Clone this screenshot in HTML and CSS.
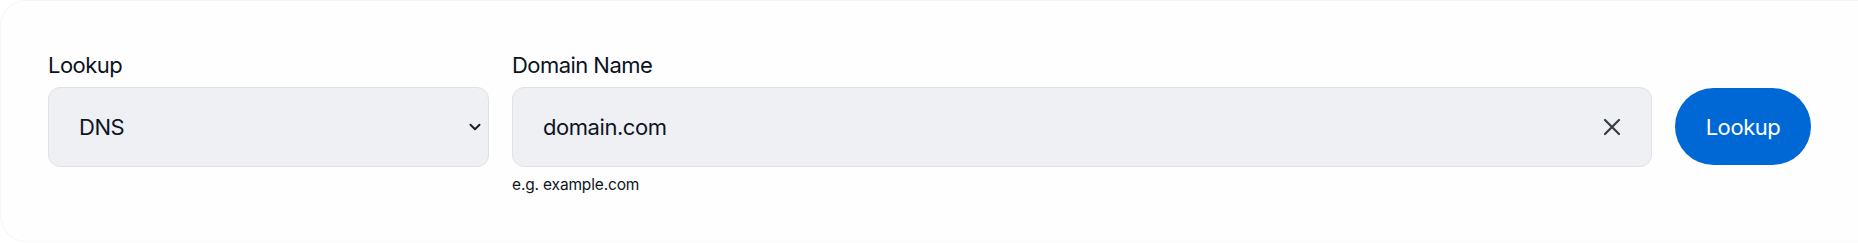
FILE: index.html
```html
<!DOCTYPE html>
<html lang="en">
<head>
<meta charset="utf-8">
<title>Lookup</title>
<link rel="stylesheet" href="styles.css">
</head>
<body>
<div class="card">
  <form class="row">
    <div class="field field-type">
      <label class="label" for="type">Lookup</label>
      <div class="control">
        <select id="type" class="select">
          <option>DNS</option>
        </select>
        <svg class="chevron" width="12" height="8" viewBox="0 0 12 8" aria-hidden="true">
          <path d="M1.5 1.8 L6 6.2 L10.5 1.8" fill="none" stroke="#1b2230" stroke-width="2" stroke-linecap="round" stroke-linejoin="round"/>
        </svg>
      </div>
    </div>
    <div class="field field-domain">
      <label class="label" for="domain">Domain Name</label>
      <div class="control">
        <input id="domain" class="input" type="text" value="domain.com">
        <svg class="clear" width="18" height="18" viewBox="0 0 18 18" aria-hidden="true">
          <path d="M2 2 L16 16 M16 2 L2 16" fill="none" stroke="#353c49" stroke-width="2.2" stroke-linecap="round"/>
        </svg>
      </div>
      <div class="help">e.g. example.com</div>
    </div>
    <button type="button" class="btn">Lookup</button>
  </form>
</div>
</body>
</html>
```

FILE: styles.css
```css
html, body {
  margin: 0;
  padding: 0;
  background: #ffffff;
  overflow: hidden;
}

body {
  font-family: "Inter", "Liberation Sans", sans-serif;
  color: #0d1424;
}

.card {
  box-sizing: border-box;
  height: 242px;
  margin-right: -30px;
  padding: 50px 76px 0 47px;
  border: 1px solid #f5f6f7;
  border-radius: 26px;
  background: #fefefe;
}

.row {
  display: flex;
  align-items: flex-start;
  gap: 23px;
}

.field {
  display: flex;
  flex-direction: column;
  gap: 8px;
}

.field-type {
  width: 441px;
}

.field-domain {
  flex: 1;
}

.label {
  font-size: 22px;
  line-height: 28px;
  letter-spacing: -0.025em;
  color: #0b1322;
}

.control {
  position: relative;
}

.select,
.input {
  box-sizing: border-box;
  width: 100%;
  height: 80px;
  margin: 0;
  padding: 0 60px 0 30px;
  border: 1px solid #dfe1e6;
  border-radius: 12px;
  background: #eef0f4;
  font-family: "Inter", "Liberation Sans", sans-serif;
  font-size: 22px;
  letter-spacing: -0.02em;
  color: #0e1525;
  outline: none;
  -webkit-appearance: none;
  appearance: none;
}

.chevron {
  position: absolute;
  right: 8px;
  top: 36px;
}

.clear {
  position: absolute;
  right: 31px;
  top: 31px;
}

.help {
  margin-top: 1px;
  font-size: 15.5px;
  line-height: 18px;
  letter-spacing: -0.01em;
  color: #10141c;
}

.btn {
  flex: none;
  width: 136px;
  height: 77px;
  margin-top: 37px;
  padding: 0;
  border: none;
  border-radius: 39px;
  background: #0068d5;
  color: #ffffff;
  font-family: "Inter", "Liberation Sans", sans-serif;
  font-size: 22px;
  letter-spacing: -0.02em;
}
```
